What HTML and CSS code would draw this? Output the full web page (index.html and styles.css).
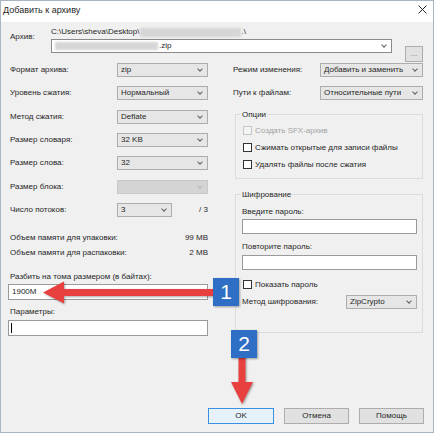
FILE: index.html
```html
<!DOCTYPE html>
<html lang="ru">
<head>
    <meta charset="UTF-8">
    <title>Добавить к архиву</title>
    <link rel="stylesheet" href="styles.css">
</head>
<body>

    <div class="window">
        <div class="titlebar">
            <span class="title">Добавить к архиву</span>
            <svg class="close" viewBox="0 0 9 9"><path d="M0.5 0.5 L8.5 8.5 M8.5 0.5 L0.5 8.5" stroke="#222" stroke-width="1" fill="none"/></svg>
        </div>

        <div class="client">
            <!-- путь к архиву -->
            <div class="archive">
                <span class="archive-label">Архив:</span>
                <div class="archive-fields">
                    <div class="archive-path">C:\Users\sheva\Desktop\<span class="hidden-part hidden-path"></span>.\</div>
                    <div class="combo combo-edit"><span class="hidden-part hidden-name"></span>.zip</div>
                </div>
                <div class="btn btn-browse">...</div>
            </div>

            <div class="main">
                <div class="col-left">
                    <div class="row"><span class="row-label">Формат архива:</span><div class="combo">zip</div></div>
                    <div class="row"><span class="row-label">Уровень сжатия:</span><div class="combo">Нормальный</div></div>
                    <div class="row"><span class="row-label">Метод сжатия:</span><div class="combo">Deflate</div></div>
                    <div class="row"><span class="row-label">Размер словаря:</span><div class="combo">32 KB</div></div>
                    <div class="row"><span class="row-label">Размер слова:</span><div class="combo">32</div></div>
                    <div class="row"><span class="row-label">Размер блока:</span><div class="combo combo-disabled"></div></div>
                    <div class="row"><span class="row-label">Число потоков:</span><div class="combo combo-short">3</div><span class="threads">/ 3</span></div>

                    <div class="info info-first"><span>Объем памяти для упаковки:</span><span>99 MB</span></div>
                    <div class="info"><span>Объем памяти для распаковки:</span><span>2 MB</span></div>

                    <div class="field-label split-label">Разбить на тома размером (в байтах):</div>
                    <div class="input split-input">1900M</div>
                    <div class="field-label params-label">Параметры:</div>
                    <div class="input params-input"><span class="caret"></span></div>
                </div>

                <div class="col-right">
                    <div class="row"><span class="row-label">Режим изменения:</span><div class="combo">Добавить и заменить</div></div>
                    <div class="row"><span class="row-label">Пути к файлам:</span><div class="combo">Относительные пути</div></div>

                    <fieldset class="group group-options">
                        <legend>Опции</legend>
                        <div class="check check-disabled"><span class="box"></span>Создать SFX-архив</div>
                        <div class="check"><span class="box"></span>Сжимать открытые для записи файлы</div>
                        <div class="check"><span class="box"></span>Удалять файлы после сжатия</div>
                    </fieldset>

                    <fieldset class="group group-crypt">
                        <legend>Шифрование</legend>
                        <div class="field-label pass-label">Введите пароль:</div>
                        <div class="input pass-input"></div>
                        <div class="field-label pass-label2">Повторите пароль:</div>
                        <div class="input pass-input2"></div>
                        <div class="check show-pass"><span class="box"></span>Показать пароль</div>
                        <div class="crypt-row"><span class="crypt-label">Метод шифрования:</span><div class="combo combo-crypt">ZipCrypto</div></div>
                    </fieldset>
                </div>
            </div>

            <div class="buttons">
                <div class="btn btn-ok">OK</div>
                <div class="btn btn-dialog">Отмена</div>
                <div class="btn btn-dialog">Помощь</div>
            </div>
        </div>

        <!-- стрелки-подсказки -->
        <svg class="marks" viewBox="0 0 434 435">
            <polygon points="43,292.5 64,281.5 64,289 216,289 216,296 64,296 64,303.5" fill="#e8403f"/>
            <polygon points="238.5,355 245.5,355 245.5,382 253,382 242,404 231,382 238.5,382" fill="#e8403f"/>
        </svg>
        <div class="badge badge-one">1</div>
        <div class="badge badge-two">2</div>
    </div>

</body>
</html>
```

FILE: styles.css
```css
body {
    margin: 0;
    background-color: #fff;
    font-family: 'Liberation Sans', Arial, sans-serif;
    font-size: 8px;
    color: #262626;
}
.window {
    position: relative;
    width: 434px;
    height: 433px;
    box-sizing: border-box;
    border: 1px solid #aab5c3;
    display: flex;
    flex-direction: column;
}
.titlebar {
    height: 21px;
    box-sizing: border-box;
    background-color: #fff;
    display: flex;
    align-items: center;
    justify-content: space-between;
    padding: 0 6px 4px 2px;
    font-size: 9px;
}
.close {
    width: 9px;
    height: 9px;
}
.client {
    flex: 1;
    background-color: #f0f0f0;
    padding: 0 9px 8px 7px;
    display: flex;
    flex-direction: column;
}

/* архив */
.archive {
    display: flex;
    height: 36px;
    margin-top: 5px;
}
.archive-label {
    width: 43px;
    box-sizing: border-box;
    padding-left: 2px;
    margin-top: 5px;
    line-height: 10px;
}
.archive-fields {
    width: 341px;
}
.archive-path {
    height: 10px;
    line-height: 10px;
    display: flex;
    align-items: center;
}
.hidden-part {
    display: inline-block;
    background-color: #d6d6d6;
    filter: blur(1px);
}
.hidden-path {
    width: 101px;
    height: 9px;
    margin-left: 1px;
}
.hidden-name {
    width: 103px;
    height: 8px;
    margin-right: 1px;
    vertical-align: middle;
}
.combo-edit {
    margin-top: 2px;
    height: 15px;
    line-height: 13px;
    background-color: #fff !important;
    border-color: #8a8a8a !important;
    display: flex;
    align-items: center;
}
.btn-browse {
    margin: 19px 0 0 13px;
    width: 18px;
    height: 17px;
    line-height: 13px !important;
    color: #777;
}

/* выпадающие списки */
.combo {
    position: relative;
    box-sizing: border-box;
    height: 14px;
    border: 1px solid #adadad;
    background-color: #e6e6e6;
    padding-left: 3px;
    line-height: 12px;
    white-space: nowrap;
}
.combo::after {
    content: "";
    position: absolute;
    right: 5px;
    top: 3px;
    width: 3px;
    height: 3px;
    border-right: 1px solid #606060;
    border-bottom: 1px solid #606060;
    transform: rotate(45deg);
}
.combo-disabled {
    background-color: #d4d4d4;
    border-color: #c8c8c8;
}
.combo-disabled::after {
    border-color: #b4b4b4;
}

.main {
    display: flex;
    gap: 25px;
}
.col-left {
    width: 200px;
}
.col-right {
    width: 190px;
}
.row {
    display: flex;
    align-items: center;
    height: 14px;
    margin-bottom: 9.33px;
}
.row-label {
    box-sizing: border-box;
    padding-left: 2px;
    line-height: 10px;
}
.col-left .row-label {
    width: 109px;
}
.col-left .combo {
    width: 91px;
}
.col-left .combo-short {
    width: 55px;
}
.threads {
    flex: 1;
    text-align: right;
}
.col-right .row-label {
    width: 87px;
    padding-left: 0;
}
.col-right .combo {
    width: 103px;
}

.info {
    display: flex;
    justify-content: space-between;
    line-height: 10px;
    padding-left: 2px;
    margin-top: 5px;
}
.info-first {
    margin-top: 16px;
}

.field-label {
    line-height: 10px;
    padding-left: 2px;
}
.input {
    box-sizing: border-box;
    height: 16px;
    background-color: #fff;
    border: 1px solid #9a9a9a;
    padding-left: 3px;
    line-height: 14px;
}
.split-label {
    margin-top: 14px;
}
.split-input {
    margin-top: 2px;
}
.params-label {
    margin-top: 7px;
}
.params-input {
    margin-top: 3px;
    position: relative;
}
.caret {
    position: absolute;
    left: 2px;
    top: 2px;
    width: 1px;
    height: 10px;
    background-color: #000;
}

/* группы */
.group {
    margin: 9px 0 0 2px;
    padding: 0 5px 8px 6px;
    border: 1px solid #dcdcdc;
    min-width: 0;
}
.group legend {
    padding: 0 1px;
    margin-left: -1px;
    line-height: 10px;
}
.check {
    display: flex;
    align-items: center;
    height: 10px;
    margin-top: 7px;
    padding-left: 1px;
}
.group-options .check:first-of-type {
    margin-top: 6px;
}
.box {
    width: 7px;
    height: 7px;
    border: 1px solid #333;
    background-color: #fff;
    margin-right: 3px;
}
.check-disabled {
    color: #a3a3a3;
}
.check-disabled .box {
    border-color: #c4c4c4;
    background-color: #f4f4f4;
}

.group-crypt {
    margin-top: 11px;
    padding-bottom: 23px;
}
.group-crypt .field-label {
    padding-left: 0;
}
.group-crypt .input {
    height: 15px;
}
.pass-label {
    margin-top: 7px;
}
.pass-input {
    margin-top: 2px;
}
.pass-label2 {
    margin-top: 8px;
}
.pass-input2 {
    margin-top: 3px;
}
.show-pass {
    margin-top: 10px;
}
.crypt-row {
    display: flex;
    align-items: center;
    margin-top: 5px;
    height: 14px;
}
.crypt-label {
    width: 104px;
}
.combo-crypt {
    width: 71px !important;
}

/* кнопки */
.buttons {
    margin-top: auto;
    display: flex;
    justify-content: flex-end;
    gap: 10px;
}
.btn {
    box-sizing: border-box;
    height: 16px;
    border: 1px solid #adadad;
    background-color: #e1e1e1;
    text-align: center;
    line-height: 14px;
}
.btn-dialog {
    width: 65px;
}
.btn-ok {
    width: 66px;
    background-color: #e5f1fb;
    border-color: #3c8fdc;
}

/* пометки поверх окна */
.marks {
    position: absolute;
    left: -1px;
    top: -1px;
    width: 434px;
    height: 435px;
    pointer-events: none;
    filter: drop-shadow(1px 1px 1px rgba(0, 0, 0, 0.35));
}
.badge {
    position: absolute;
    width: 26px;
    height: 28px;
    background-color: #2e6ec4;
    color: #fff;
    font-size: 21px;
    line-height: 28px;
    text-align: center;
    box-shadow: 1px 1px 2px rgba(0, 0, 0, 0.35);
}
.badge-one {
    left: 212px;
    top: 277px;
}
.badge-two {
    left: 230px;
    top: 329px;
}
```
